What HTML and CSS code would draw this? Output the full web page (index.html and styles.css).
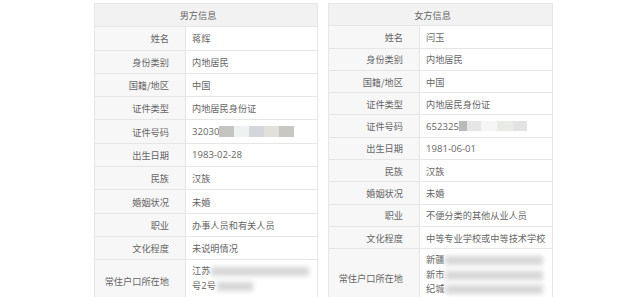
FILE: index.html
```html
<!DOCTYPE html>
<html lang="zh-CN">
<head>
<meta charset="utf-8">
<link rel="stylesheet" href="styles.css">
</head>
<body>
<div class="wrap">
  <table class="info info-left">
    <colgroup><col class="c-label"><col class="c-val-l"></colgroup>
    <tr><th colspan="2" class="head">男方信息</th></tr>
    <tr><td class="lab">姓名</td><td class="val">蒋辉</td></tr>
    <tr><td class="lab">身份类别</td><td class="val">内地居民</td></tr>
    <tr><td class="lab">国籍/地区</td><td class="val">中国</td></tr>
    <tr><td class="lab">证件类型</td><td class="val">内地居民身份证</td></tr>
    <tr><td class="lab">证件号码</td><td class="val"><span class="num">32030</span><span class="mask mask-l"><i class="b1"></i><i class="b2"></i><i class="b3"></i><i class="b4"></i><i class="b5"></i></span></td></tr>
    <tr><td class="lab">出生日期</td><td class="val"><span class="num">1983-02-28</span></td></tr>
    <tr><td class="lab">民族</td><td class="val">汉族</td></tr>
    <tr><td class="lab">婚姻状况</td><td class="val">未婚</td></tr>
    <tr><td class="lab">职业</td><td class="val">办事人员和有关人员</td></tr>
    <tr><td class="lab">文化程度</td><td class="val">未说明情况</td></tr>
    <tr class="addr"><td class="lab">常住户口所在地</td><td class="val"><div class="line">江苏<span class="blur w100"></span></div><div class="line">号<span class="num">2</span>号<span class="blur w40"></span></div></td></tr>
  </table>
  <table class="info info-right">
    <colgroup><col class="c-label"><col class="c-val-r"></colgroup>
    <tr><th colspan="2" class="head">女方信息</th></tr>
    <tr><td class="lab">姓名</td><td class="val">闫玉</td></tr>
    <tr><td class="lab">身份类别</td><td class="val">内地居民</td></tr>
    <tr><td class="lab">国籍/地区</td><td class="val">中国</td></tr>
    <tr><td class="lab">证件类型</td><td class="val">内地居民身份证</td></tr>
    <tr><td class="lab">证件号码</td><td class="val"><span class="num">652325</span><span class="mask mask-r"><i class="r1"></i><i class="r2"></i><i class="r3"></i><i class="r4"></i><i class="r5"></i></span></td></tr>
    <tr><td class="lab">出生日期</td><td class="val"><span class="num">1981-06-01</span></td></tr>
    <tr><td class="lab">民族</td><td class="val">汉族</td></tr>
    <tr><td class="lab">婚姻状况</td><td class="val">未婚</td></tr>
    <tr><td class="lab">职业</td><td class="val">不便分类的其他从业人员</td></tr>
    <tr><td class="lab">文化程度</td><td class="val">中等专业学校或中等技术学校</td></tr>
    <tr class="addr"><td class="lab">常住户口所在地</td><td class="val"><div class="line">新疆<span class="blur w100"></span></div><div class="line">新市<span class="blur w100"></span></div><div class="line">纪城<span class="blur w100"></span></div></td></tr>
  </table>
</div>
</body>
</html>
```
FILE: styles.css
```css
html, body {
  margin: 0;
  padding: 0;
  background: #ffffff;
}
body {
  font-family: "Noto Sans CJK SC", "Noto Sans", sans-serif;
  font-size: 9.2px;
  color: #666666;
  overflow: hidden;
}
.wrap {
  display: flex;
  align-items: flex-start;
  gap: 10px;
  padding: 3px 0 0 94px;
}
.info {
  border-collapse: collapse;
  table-layout: fixed;
  border: 1px solid #e6e6e6;
}
.info-left { width: 224px; }
.info-right { width: 225px; }
.c-label { width: 91px; }
.info th, .info td {
  border: 1px solid #e6e6e6;
  padding: 0;
  font-weight: normal;
  line-height: 14px;
}
.head {
  background: #f2f2f2;
  text-align: center;
  padding-right: 16px !important;
}
.lab {
  background: #f7f7f7;
  text-align: right;
  padding-right: 16px !important;
  white-space: nowrap;
}
.val {
  background: #fff;
  text-align: left;
  padding-left: 6px !important;
  white-space: nowrap;
  overflow: hidden;
}
.num {
  font-family: "Open Sans", "Noto Sans", sans-serif;
  font-size: 9.6px;
}
.info-left th, .info-left td { height: 22.3px; }
.info-right th, .info-right td { height: 21.3px; }
.info-left .addr td { height: 38px; }
.info-right .addr td { height: 54px; }
.info-left .addr .val { vertical-align: top; padding-top: 3px !important; line-height: 15px; }
.info-right .addr .val { vertical-align: top; padding-top: 3px !important; line-height: 14.5px; }
.mask {
  display: inline-flex;
  vertical-align: middle;
  height: 11px;
  margin-top: -2px;
}
.mask i { display: block; height: 100%; }
.mask-l i { width: 15px; }
.b1 { background: #c4c5c0; }
.b2 { background: #eef2f0; }
.b3 { background: #d5d5dc; }
.b4 { background: #e2e0da; }
.b5 { background: #c7c8c4; }
.mask-r { height: 10px; }
.r1 { width: 8px; background: #b9bbb9; }
.r2 { width: 14px; background: #e5e6e5; }
.r3 { width: 16px; background: #f5f6f5; }
.r4 { width: 16px; background: #e9ece4; }
.r5 { width: 14px; background: #e2e3e2; }
.line { white-space: nowrap; }
.blur {
  display: inline-block;
  vertical-align: middle;
  height: 9px;
  background: #d6d6d6;
  filter: blur(2.5px);
  margin-left: 1px;
}
.w100 { width: 98px; }
.w40 { width: 36px; }
```
